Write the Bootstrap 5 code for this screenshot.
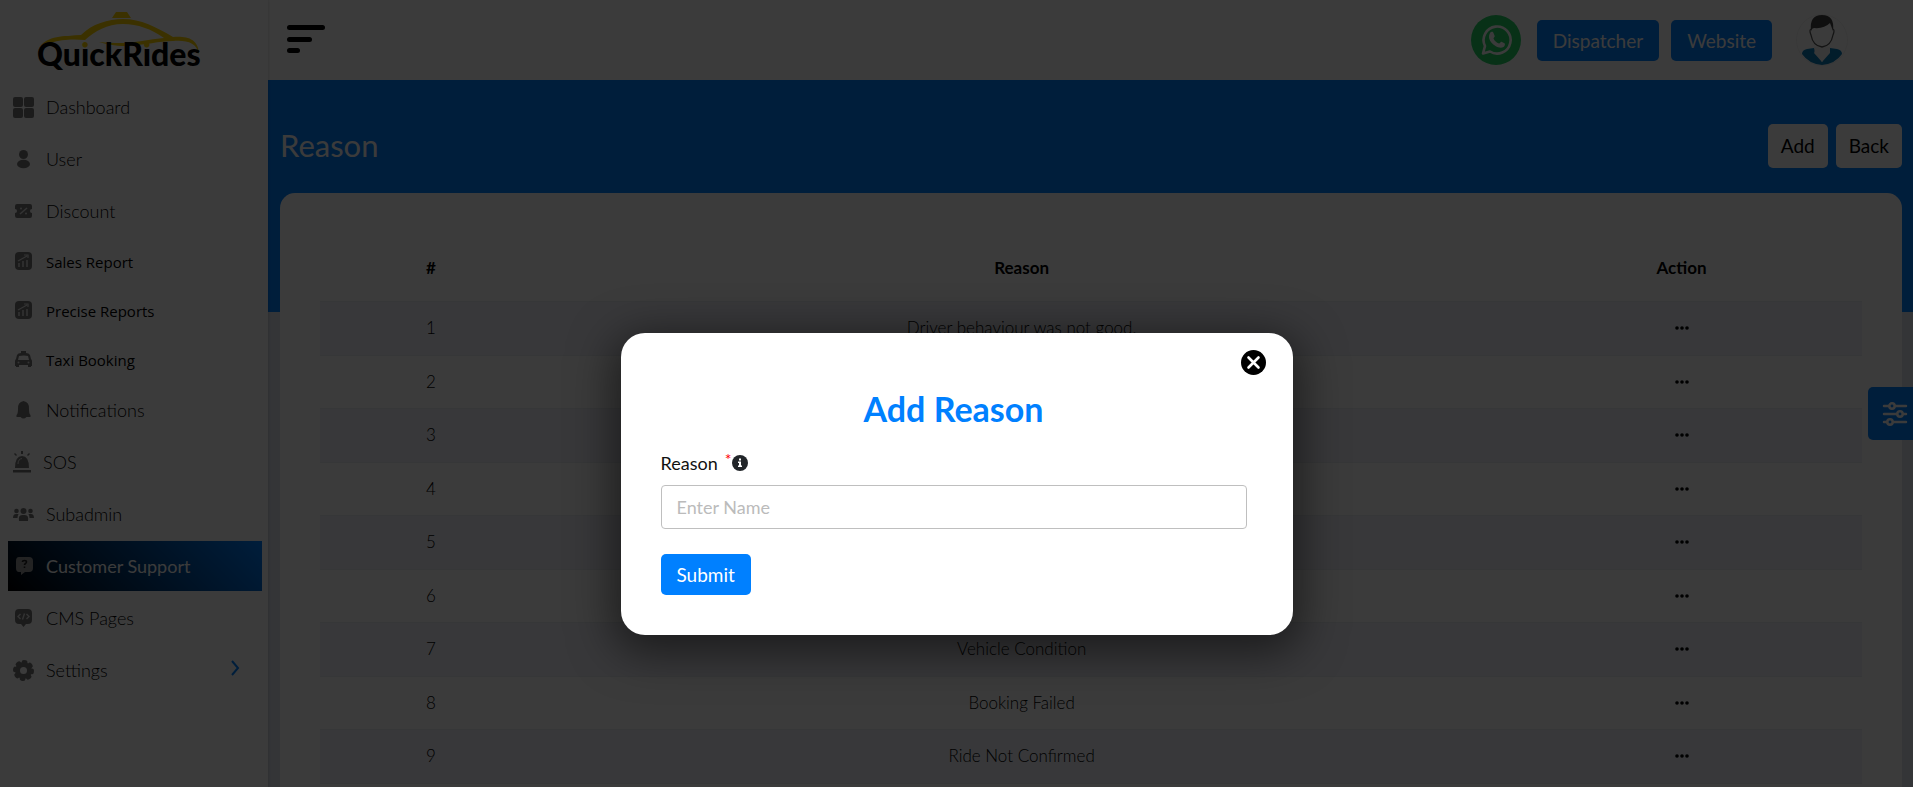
<!DOCTYPE html>
<html lang="en">
<head>
<meta charset="utf-8">
<meta name="viewport" content="width=device-width, initial-scale=1">
<title>QuickRides - Reason</title>
<link href="https://cdn.jsdelivr.net/npm/bootstrap@5.3.0/dist/css/bootstrap.min.css" rel="stylesheet">
<style>
:root { --brand: #0080ff; }
body { font-family: "Lato", sans-serif; font-weight: 300; background: #fff; }
.app-shell { margin-right: 4px; background: #dfe3ee; }
.side-panel { width: 268px; background: #fff; box-shadow: 0 0 3px rgba(0, 0, 0, .2); z-index: 1; }
.brand-logo { height: 82px; }
.menu-link { height: 50px; margin: 0 6px 2px 8px; padding-left: 3px; font-size: 18px; color: #000; text-decoration: none; }
.menu-link.compact { height: 47px; font: 400 15px "Open Sans", sans-serif; }
.menu-link svg { width: 24px; height: 24px; margin-right: 11px; fill: #777; flex: none; }
.menu-link.current { background: linear-gradient(45deg, #000, var(--brand)); color: #fff; font-weight: 400; }
.menu-link.current svg { fill: #999; }
.top-bar { height: 80px; background: #fff; padding: 0 65px 0 19px; }
.btn-brand { background: var(--brand); color: #fff; font-size: 19px; font-weight: 400; line-height: 29px; padding: 6px 16px; border-radius: 5px; }
.btn-brand:hover { background: #006fe0; color: #fff; }
.page-band { background: linear-gradient(var(--brand), var(--brand)) no-repeat 0 0 / 100% 232px; padding: 44px 11px 0 12px; }
.page-title { font-size: 31px; font-weight: 400; color: #fff; }
.btn-plain { background: #fff; color: #000; font-size: 19px; font-weight: 400; line-height: 32px; padding: 6px 13px; border-radius: 5px; }
.data-card { background: #fff; border: 0; border-radius: 15px 15px 0 0; padding: 53px 40px 0; margin-top: 25px; }
.reason-table { font-size: 17px; text-align: center; table-layout: fixed; --bs-table-bg: transparent; }
.reason-table th, .reason-table td { padding: 0; vertical-align: middle; border: 0; color: #000; background: none; box-shadow: none; }
.reason-table th { font-weight: 700; height: 55px; padding-bottom: 12px; }
.reason-table td { height: 53px; }
.reason-table tbody tr:nth-child(odd) td { height: 54px; background: #eff2f8; border-top: 1px solid #e8ebf0; border-bottom: 1px solid #e8ebf0; }
.filter-tab { top: 387px; right: 0; width: 45px; height: 53px; background: var(--brand); border-radius: 5px 0 0 5px; z-index: 2; }
.dim-layer { background: rgba(0, 0, 0, .77); z-index: 5; }
.reason-dialog { width: 672px; max-width: 94%; margin: 333px auto 0; }
.reason-dialog .modal-content { background: #fff; border: 0; border-radius: 24px; padding: 17px 46px 40px 40px; box-shadow: 0 10px 44px 8px rgba(0, 0, 0, .5); }
.close-row { margin-right: -19px; }
.dialog-title { font-size: 34px; font-weight: 700; line-height: 40px; color: var(--brand); margin: 14px 0 22px; }
.field-label { font-size: 18px; line-height: 24px; color: #111; font-weight: 400; margin-bottom: 10px; }
.field-label sup { color: red; font-size: 16px; top: -4px; margin-left: 7px; }
.field-box { height: 44px; font-size: 18px; border: 1px solid #bfbfbf; border-radius: 4px; padding: 6px 15px; margin-bottom: 25px; }
.field-box::placeholder { color: #bbb; font-weight: 400; }
</style>
</head>
<body>
<div class="app-shell position-relative vh-100 overflow-hidden d-flex">

  <nav class="side-panel d-flex flex-column flex-shrink-0 position-relative" aria-label="Main">
    <a href="#" class="brand-logo d-block" aria-label="QuickRides home">
      <svg width="240" height="80" viewBox="0 0 240 80">
        <defs><linearGradient id="dotFill" gradientUnits="userSpaceOnUse" x1="0" y1="40" x2="0" y2="60"><stop offset=".44" stop-color="#ffd400"/><stop offset=".44" stop-color="#000"/></linearGradient></defs>
        <g fill="#ffd400">
          <path d="M112 18 116 12h11l4 6z"/>
          <path d="M38 54C38 42 52 36 68 36Q76 35 81 35C92 24 108 19 123 19C141 19 156 27 173 37C186 36 199 38 199 55C197 42 186 40 173 41C159 41 146 45 126 46C114 46 106 44 99 42C114 44 131 43 142 41Q153 39 164 38C151 29 138 24 123 24C107 24 95 31 85 40C66 38 42 41 38 54Z"/>
        </g>
        <text x="37" y="66" font-family="Lato, sans-serif" font-weight="900" font-size="32">Qu<tspan fill="url(#dotFill)">i</tspan>ckR<tspan fill="url(#dotFill)">i</tspan>des</text>
      </svg>
    </a>
    <a href="#" class="menu-link d-flex align-items-center"><svg viewBox="0 0 24 24"><rect x="2" y="2" width="10" height="10" rx="2"/><rect x="13" y="2" width="10" height="10" rx="2"/><rect x="2" y="13" width="10" height="10" rx="2"/><rect x="13" y="13" width="10" height="10" rx="2"/></svg>Dashboard</a>
    <a href="#" class="menu-link d-flex align-items-center"><svg viewBox="0 0 24 24"><circle cx="12.500" cy="7.500" r="4.500"/><ellipse cx="12.500" cy="17" rx="6.500" ry="4.300"/></svg>User</a>
    <a href="#" class="menu-link d-flex align-items-center"><svg viewBox="0 0 24 24"><path d="M6 5h13q2 0 2 2v3a2 2 0 0 0 0 4v3q0 2-2 2H6q-2 0-2-2v-3a2 2 0 0 0 0-4V7q0-2 2-2Z"/><path d="m9 15 7-6" stroke="#ddd" stroke-width="1.500"/><circle cx="10" cy="9.500" r="1" fill="#ddd"/><circle cx="15" cy="14.500" r="1" fill="#ddd"/></svg>Discount</a>
    <a href="#" class="menu-link compact d-flex align-items-center"><svg viewBox="0 0 24 24"><rect x="4" y="2" width="17" height="18" rx="4"/><path d="M8 17v-4m4 4v-6m4 6v-7" stroke="#ddd" stroke-width="1.500"/><path d="m7 11 9-5m-3-1h4v3" fill="none" stroke="#ddd" stroke-width="1.200"/></svg>Sales Report</a>
    <a href="#" class="menu-link compact d-flex align-items-center"><svg viewBox="0 0 24 24"><rect x="4" y="2" width="17" height="18" rx="4"/><path d="M8 17v-4m4 4v-6m4 6v-7" stroke="#ddd" stroke-width="1.500"/><path d="m7 11 9-5m-3-1h4v3" fill="none" stroke="#ddd" stroke-width="1.200"/></svg>Precise Reports</a>
    <a href="#" class="menu-link compact d-flex align-items-center"><svg viewBox="0 0 24 24"><path fill-rule="evenodd" d="M10 3h5v2q3 0 4 2l1 4q1 1 1 2v5h-1v1h-3v-2H8v2H5v-1H4v-5q0-1 1-2l1-4q1-2 4-2ZM8 8l-1 4h11l-1-4q-4-1-9 0Z"/><circle cx="7.500" cy="14.500" r="1" fill="#ddd"/><circle cx="17.500" cy="14.500" r="1" fill="#ddd"/></svg>Taxi Booking</a>
    <a href="#" class="menu-link d-flex align-items-center"><svg viewBox="0 0 24 24"><path d="M12.500 3q6 1 5.500 8 0 5 1.500 6v2h-14v-2Q7 16 7 11q-.500-7 5.500-8ZM9.500 19h6q-3 3-6 0Z"/></svg>Notifications</a>
    <a href="#" class="menu-link d-flex align-items-center"><svg class="me-2" viewBox="0 0 24 24"><path d="M4 18q0-12 7-12t7 12zM2 20h18v2.500H2zM10 1h2v3h-2zM3 4l1-1 2 2-1 1zM18 3l1 1-2 2-1-1z"/><path d="M7 14q0-5 4-5.500" fill="none" stroke="#ddd"/></svg>SOS</a>
    <a href="#" class="menu-link d-flex align-items-center"><svg viewBox="0 0 24 24"><circle cx="12.500" cy="9" r="3"/><circle cx="5.500" cy="9" r="2.300"/><circle cx="19.500" cy="9" r="2.300"/><path d="M8 19q-1-6 3-6h3q4 0 3 6zM2 16q0-4 3-4h2.500Q6.500 14 6.500 16zM23 16q0-4-3-4h-2.500q1 2 1 4z"/></svg>Subadmin</a>
    <a href="#" class="menu-link current d-flex align-items-center" aria-current="page"><svg viewBox="0 0 24 24"><path d="M8 3h10q4 0 4 4v7q0 4-4 4h-4l-4 3v-3H8q-3 0-3-4V7q0-4 3-4Z"/><path d="M11.500 8q0-1.500 2-1.500t2 1.500c0 1.500-2 1.500-2 3m0 1.500v1.500" fill="none" stroke="#222" stroke-width="1.600"/></svg>Customer Support</a>
    <a href="#" class="menu-link d-flex align-items-center"><svg viewBox="0 0 24 24"><path d="M8 3h9q4 0 4 4v7q0 4-4 4h-2l-2.500 3-2.500-3H8q-4 0-4-4V7q0-4 4-4Z"/><path d="M9.500 8 7 10.500 9.500 13m6-5 2.500 2.500L15.500 13m-2-5.500-2 6" fill="none" stroke="#ddd" stroke-width="1.400"/></svg>CMS Pages</a>
    <a href="#" class="menu-link d-flex align-items-center"><svg viewBox="0 0 24 24"><circle cx="12.500" cy="12.500" r="6" fill="none" stroke="#777" stroke-width="5"/><circle cx="12.500" cy="12.500" r="8.500" fill="none" stroke="#777" stroke-width="4" stroke-linecap="round" stroke-dasharray="1.800 4.870"/></svg>Settings<svg class="ms-auto me-3" viewBox="0 0 24 24"><path d="m10 3 6 7-6 7" fill="none" stroke="#0080ff" stroke-width="2"/></svg></a>
  </nav>

  <div class="flex-grow-1 d-flex flex-column">
    <header class="top-bar d-flex align-items-center flex-shrink-0">
      <button class="btn p-0 border-0" aria-label="Toggle menu"><svg class="d-block" width="38" height="30" viewBox="0 0 38 30"><rect width="38" height="5" rx="2.500"/><rect y="12" width="25" height="5" rx="2.500"/><rect y="23" width="13" height="5" rx="2.500"/></svg></button>
      <div class="ms-auto d-flex align-items-center">
        <a href="#" class="me-3" aria-label="WhatsApp"><svg class="d-block" width="50" height="50" viewBox="0 0 50 50"><circle cx="25" cy="25" r="25" fill="#25d366"/><path d="M12 38.500 14 31A13.500 13.500 0 1 1 19 36.500Z" fill="none" stroke="#fff" stroke-width="2.600" stroke-linejoin="round"/><path d="M19 18c2-2 3-1 3.500 0l1.200 3c.2 1-1.200 1.800-1.200 2.500 1 2.500 3 4 5.500 5 1 0 1.500-2 2.500-1.800l3 1.500c1 .6.300 3-1 3.800-2.500 1.500-5.500.5-8-1-3-2-5.500-4.500-6.300-7.500-.4-2 0-4 .8-5.500Z" fill="#fff"/></svg></a>
        <button class="btn btn-brand border-0 me-2">Dispatcher</button>
        <button class="btn btn-brand border-0 ms-1">Website</button>
        <a href="#" class="ms-4" aria-label="Profile"><svg class="d-block" width="52" height="52" viewBox="0 0 52 52"><circle cx="26" cy="26" r="25.500" fill="#fff" stroke="#f2f2f2"/><path d="M6 40q0-4 5-5l7-1 8 14 8-14 7 1q5 1 5 5-7 10-20 11Q13 50 6 40Z" fill="#0a7cba"/><path d="M18 33q1 5 0 6l8 9 8-9v-6" fill="#f4f4f4"/><path d="M15 15q-2 1 0 6 2 11 11 12 9-1 11-12 2-5 0-6" fill="#fff" stroke="#555" stroke-width="1.300"/><path d="M15 17q-2-16 11-16t11 16l-3-8q-6 6-16 5-2 0-3 3Z" fill="#444"/></svg></a>
      </div>
    </header>

    <main class="page-band flex-grow-1">
      <div class="d-flex align-items-center">
        <h1 class="page-title mb-0 me-auto">Reason</h1>
        <button class="btn btn-plain border-0 me-2">Add</button>
        <button class="btn btn-plain border-0">Back</button>
      </div>
      <section class="card data-card">
        <table class="table reason-table mb-0">
          <colgroup><col style="width:14.4%"><col style="width:62.2%"><col style="width:23.4%"></colgroup>
          <thead><tr><th scope="col">#</th><th scope="col">Reason</th><th scope="col">Action</th></tr></thead>
          <tbody id="reasonRows"></tbody>
        </table>
      </section>
    </main>
  </div>

  <button class="btn filter-tab position-absolute border-0 p-0 ps-2 d-flex align-items-center justify-content-center" aria-label="Filter">
    <svg width="26" height="24" viewBox="0 0 26 24" fill="none" stroke="#fff" stroke-width="2.500" stroke-linecap="round"><path d="M2 4h5m6 0h11M2 12h13m6 0h3M2 20h3m6 0h13"/><circle cx="10" cy="4" r="2.700"/><circle cx="18" cy="12" r="2.700"/><circle cx="8" cy="20" r="2.700"/></svg>
  </button>

  <div class="dim-layer position-absolute top-0 start-0 w-100 h-100">
    <div class="reason-dialog" role="dialog" aria-modal="true" aria-labelledby="dialogTitle">
      <form class="modal-content">
        <div class="close-row d-flex justify-content-end"><button type="button" class="btn p-0 border-0" aria-label="Close"><svg class="d-block" width="25" height="25" viewBox="0 0 25 25"><circle cx="12.500" cy="12.500" r="12.500"/><path d="m7.500 7.500 10 10m0-10-10 10" stroke="#fff" stroke-width="2.600" stroke-linecap="round"/></svg></button></div>
        <h2 class="dialog-title text-center" id="dialogTitle">Add Reason</h2>
        <label class="field-label d-flex align-items-center" for="reasonName">Reason <sup>*</sup><svg width="16" height="16" viewBox="0 0 16 16"><circle cx="8" cy="8" r="8" fill="#212529"/><path d="M7 3.500h2v2H7zM6 6.500h3v4h1V12H6v-1.500h1V8H6z" fill="#fff"/></svg></label>
        <input class="form-control field-box" id="reasonName" type="text" placeholder="Enter Name">
        <button type="button" class="btn btn-brand border-0 align-self-start">Submit</button>
      </form>
    </div>
  </div>
</div>

<script src="https://cdn.jsdelivr.net/npm/bootstrap@5.3.0/dist/js/bootstrap.bundle.min.js"></script>
<script>
const reasons = ['Driver behaviour was not good.', '', '', '', '', '', 'Vehicle Condition', 'Booking Failed', 'Ride Not Confirmed', ''];
document.getElementById('reasonRows').innerHTML = reasons.map((reason, i) => `
  <tr><td>${i < 9 ? i + 1 : ''}</td><td>${reason}</td>
  <td><button class="btn d-block mx-auto p-0 border-0" aria-label="Actions"><svg class="d-block" width="14" height="4" viewBox="0 0 14 4"><circle cx="2" cy="2" r="1.800"/><circle cx="7" cy="2" r="1.800"/><circle cx="12" cy="2" r="1.800"/></svg></button></td></tr>`).join('');
</script>
</body>
</html>
